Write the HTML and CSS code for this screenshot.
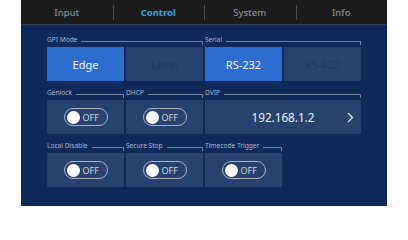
FILE: index.html
```html
<!DOCTYPE html>
<html>
<head>
<meta charset="utf-8">
<link rel="stylesheet" href="styles.css">
</head>
<body>
<div class="panel">
  <nav class="tabs">
    <div class="tab">Input</div>
    <div class="tab active">Control</div>
    <div class="tab">System</div>
    <div class="tab">Info</div>
  </nav>
  <main class="content">
    <section class="group span2">
      <div class="label"><span>GPI Mode</span><i class="rule"></i></div>
      <div class="cells">
        <div class="btn on">Edge</div>
        <div class="btn off">Level</div>
      </div>
    </section>
    <section class="group span2">
      <div class="label"><span>Serial</span><i class="rule"></i></div>
      <div class="cells">
        <div class="btn on">RS-232</div>
        <div class="btn off">RS-422</div>
      </div>
    </section>

    <section class="group">
      <div class="label"><span>Genlock</span><i class="rule"></i></div>
      <div class="cells"><div class="cell"><div class="toggle"><b class="knob"></b><span>OFF</span></div></div></div>
    </section>
    <section class="group">
      <div class="label"><span>DHCP</span><i class="rule"></i></div>
      <div class="cells"><div class="cell"><div class="toggle"><b class="knob"></b><span>OFF</span></div></div></div>
    </section>
    <section class="group span2">
      <div class="label"><span>DVIP</span><i class="rule"></i></div>
      <div class="cells">
        <div class="cell ip">
          <span class="ipval">192.168.1.2</span>
          <svg class="chev" width="7" height="11" viewBox="0 0 7 11"><path d="M1 1 L5.5 5.5 L1 10" fill="none" stroke="#e6eaf2" stroke-width="1.2"/></svg>
        </div>
      </div>
    </section>

    <section class="group">
      <div class="label"><span>Local Disable</span><i class="rule"></i></div>
      <div class="cells"><div class="cell"><div class="toggle"><b class="knob"></b><span>OFF</span></div></div></div>
    </section>
    <section class="group">
      <div class="label"><span>Secure Stop</span><i class="rule"></i></div>
      <div class="cells"><div class="cell"><div class="toggle"><b class="knob"></b><span>OFF</span></div></div></div>
    </section>
    <section class="group">
      <div class="label"><span>Timecode Trigger</span><i class="rule"></i></div>
      <div class="cells"><div class="cell"><div class="toggle"><b class="knob"></b><span>OFF</span></div></div></div>
    </section>
  </main>
</div>
</body>
</html>
```

FILE: styles.css
```css
* { box-sizing: border-box; }
html, body { margin: 0; padding: 0; background: #ffffff; }
body { font-family: "Noto Sans", "Open Sans", sans-serif; }

.panel {
  margin-left: 21px;
  width: 366px;
  height: 206px;
  background: #0f2a5a;
  overflow: hidden;
}

.tabs {
  display: flex;
  height: 25px;
  background: #1b1b1c;
  border-bottom: 1px solid #2a3a57;
}
.tab {
  flex: 1;
  display: flex;
  align-items: center;
  justify-content: center;
  font-size: 9.5px;
  font-weight: 500;
  color: #8a8c90;
  position: relative;
}
.tab + .tab::before {
  content: "";
  position: absolute;
  left: 0;
  top: 5px;
  height: 15px;
  border-left: 1px solid #4a4b4e;
}
.tab.active { color: #29a9e4; font-weight: 700; }

.content {
  display: grid;
  grid-template-columns: repeat(4, 77px);
  column-gap: 2px;
  row-gap: 5px;
  padding: 8px 0 0 26px;
}
.group.span2 { grid-column: span 2; }

.label {
  display: flex;
  align-items: flex-start;
  height: 14px;
  font-size: 6.6px;
  color: #a9b6cf;
  line-height: 14px;
}
.label span { white-space: nowrap; padding-right: 4px; }
.rule {
  flex: 1;
  margin-top: 7.5px;
  height: 4px;
  border-top: 1px solid #6f82a6;
  border-right: 1px solid #6f82a6;
}

.cells {
  display: flex;
  gap: 2px;
  height: 34px;
}
.btn, .cell {
  flex: 1;
  display: flex;
  align-items: center;
  justify-content: center;
}
.btn { font-size: 11px; }
.btn.on { background: #2b6dcf; color: #f2f6fc; }
.btn.off { background: #27426e; color: #1d3764; }
.cell { background: #27426e; }

.toggle {
  width: 44px;
  height: 18px;
  border: 1.3px solid #aab3c4;
  border-radius: 9px;
  display: flex;
  align-items: center;
  padding-left: 2px;
  gap: 3px;
}
.knob {
  width: 13px;
  height: 13px;
  border-radius: 50%;
  background: #ffffff;
}
.toggle span {
  font-size: 9px;
  color: #d3d8e2;
  line-height: 1;
}

.cell.ip { position: relative; }
.ipval { font-size: 11.7px; color: #eef2f8; }
.chev { position: absolute; right: 7px; top: 12px; }
```
